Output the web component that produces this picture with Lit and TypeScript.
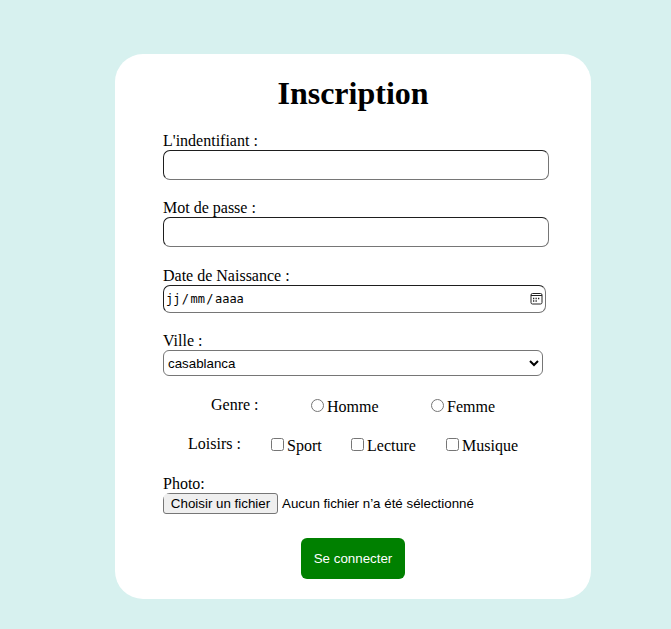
import { LitElement, html, css } from "lit";
import { customElement } from "lit/decorators.js";

@customElement("app-root")
export class AppRoot extends LitElement {
  static styles = css`
    :host {
      display: block;
      box-sizing: border-box;
      height: 629px;
      padding: 54px 80px 30px 115px;
      overflow: hidden;
      background: #d7f1ef;
      color: #000;
      font: 16px/18px "Liberation Serif", "Times New Roman", serif;
    }
    * { box-sizing: border-box; }
    .card {
      display: flex;
      flex-direction: column;
      width: 476px;
      height: 545px;
      padding: 20px 42px 20px 48px;
      border-radius: 28px;
      background: #fff;
    }
    h1 {
      margin: 0 6px 20px 0;
      padding-top: 1px;
      text-align: center;
      font-size: 32px;
      line-height: 37px;
    }
    .field { display: flex; flex-direction: column; margin-bottom: 19px; }
    .text, .date {
      margin: 0;
      width: 386px;
      height: 30px;
      padding: 1px 2px;
      border: 1px solid;
      border-color: #1e1e1e #767676 #767676 #1e1e1e;
      border-radius: 7px;
      background: #fff;
      outline: none;
    }
    .pass { margin-bottom: 20px; }
    .date {
      display: flex;
      align-items: center;
      width: 383px;
      height: 28px;
      padding: 0 2px 0 2px;
      font: 12px/15px "DejaVu Sans Mono", monospace;
    }
    .slash { margin: 0 1.4px; }
    .calendar { width: 13px; height: 13px; margin: 0 0 1px auto; }
    .city {
      display: block;
      width: 380px;
      height: 26px;
      margin: 0;
      padding: 0;
      border: 1px solid #767676;
      border-radius: 6px;
      background: #fff;
      color: #000;
      font: 13.333px "Liberation Sans", Arial, sans-serif;
    }
    .last { margin-bottom: 20px; }
    .row { display: flex; align-items: flex-start; height: 20px; margin-bottom: 19px; }
    .genre { padding-left: 48px; }
    .loisirs { padding-left: 25px; margin-bottom: 20px; }
    .caption { flex: none; }
    .genre .caption { width: 100px; }
    .loisirs .caption { width: 83px; }
    .choice { display: flex; flex: none; padding-top: 2px; }
    .choice input { width: 13px; height: 13px; margin: 1px 3px 0 0; }
    .homme { width: 120px; }
    .sport { width: 80px; }
    .lecture { width: 95px; }
    .file {
      display: flex;
      align-items: center;
      gap: 4px;
      border-radius: 7px 0 0 0;
      overflow: hidden;
      font: 13.333px/15px "Liberation Sans", Arial, sans-serif;
      white-space: nowrap;
    }
    .browse {
      width: 115px;
      height: 21px;
      padding: 0;
      border: 1px solid #767676;
      border-radius: 3px;
      background: #efefef;
      color: #000;
      font: inherit;
    }
    .photo { margin-bottom: 24px; }
    .submit {
      width: 104px;
      height: 41px;
      margin-left: 138px;
      padding: 0;
      border: 0;
      border-radius: 6px;
      background: #008000;
      color: #fff;
      font: 13.333px "Liberation Sans", Arial, sans-serif;
    }
  `;

  render() {
    return html`
      <form class="card" @submit=${(e: Event) => e.preventDefault()}>
        <h1>Inscription</h1>
        <label class="field">L'indentifiant :<input class="text" type="text" /></label>
        <label class="field pass">Mot de passe :<input class="text" type="password" /></label>
        <div class="field">
          <span>Date de Naissance :</span>
          <div class="date">
            <span>jj</span><span class="slash">/</span><span>mm</span><span class="slash">/</span><span>aaaa</span>
            <svg class="calendar" viewBox="0 0 13 13" fill="none" stroke="#222">
              <rect x="1" y="1.5" width="11" height="10.5" rx="1.5" />
              <path d="M1 3.5h11" />
              <path d="M5.5 6.5h1.3M8 6.5h1.3M3 6.5h1.3M3 9h1.3M5.5 9h1.3" stroke-width="1.3" />
            </svg>
          </div>
        </div>
        <label class="field last">Ville :
          <select class="city"><option>casablanca</option></select>
        </label>
        <div class="row genre">
          <span class="caption">Genre :</span>
          <label class="choice homme"><input type="radio" name="genre" />Homme</label>
          <label class="choice"><input type="radio" name="genre" />Femme</label>
        </div>
        <div class="row loisirs">
          <span class="caption">Loisirs :</span>
          <label class="choice sport"><input type="checkbox" />Sport</label>
          <label class="choice lecture"><input type="checkbox" />Lecture</label>
          <label class="choice"><input type="checkbox" />Musique</label>
        </div>
        <div class="field photo">
          <span>Photo:</span>
          <div class="file">
            <button class="browse" type="button">Choisir un fichier</button>
            <span>Aucun fichier n’a été sélectionné</span>
          </div>
        </div>
        <button class="submit">Se connecter</button>
      </form>
    `;
  }
}
